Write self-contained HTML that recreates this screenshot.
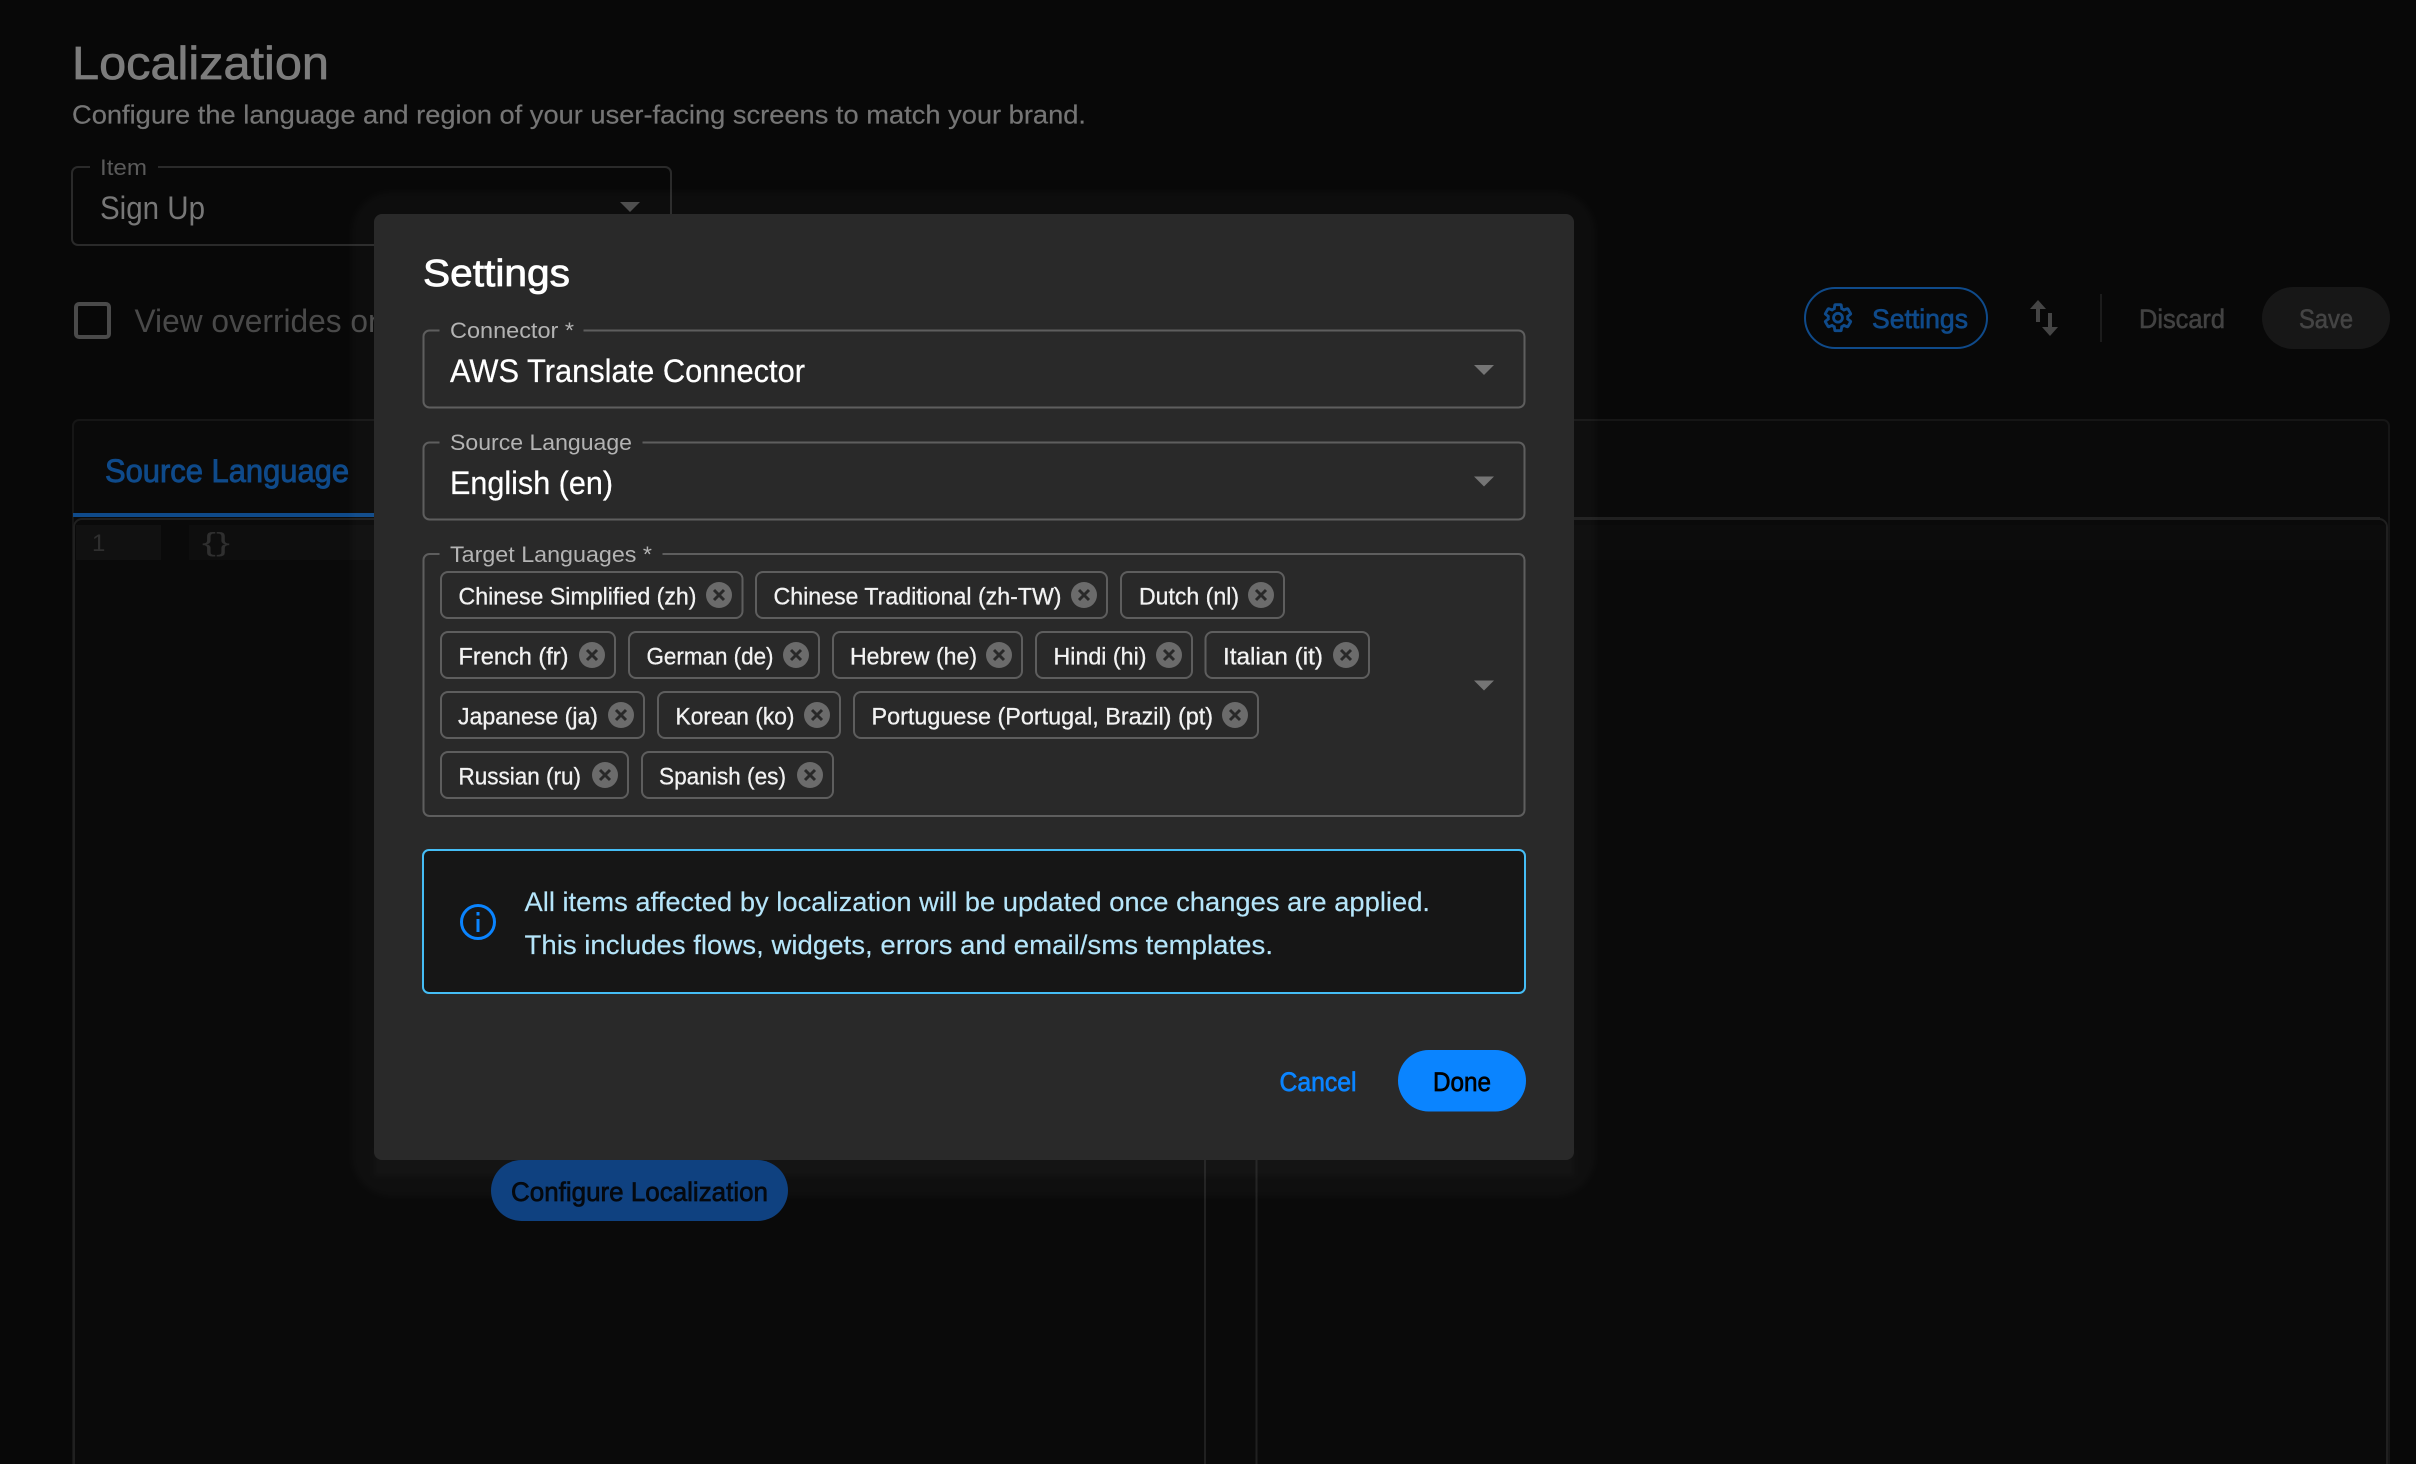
<!DOCTYPE html>
<html lang="en">
<head>
<meta charset="utf-8">
<title>Localization</title>
<style>
html,body{margin:0;padding:0;background:#080808;width:2416px;height:1464px;overflow:hidden}
svg{display:block;position:absolute;left:0;top:0}
text{font-family:"Liberation Sans",sans-serif;white-space:pre}
.chip text{font-size:24px;fill:#f2f2f2;stroke:#f2f2f2;stroke-width:.3px}
.chip rect{fill:none;stroke:#5e5e5e;stroke-width:2}
.chip circle{fill:#6b6b6b}
.chip path{stroke:#292929;stroke-width:3;fill:none}
.fld{fill:none;stroke:#5e5e5e;stroke-width:2}
.lab{font-size:22px;fill:#b3b3b3}
.val{font-size:32px;fill:#fff;stroke:#fff;stroke-width:.25px}
.arr{fill:#757575}
</style>
</head>
<body>
<svg width="2416" height="1464" viewBox="0 0 2416 1464" xmlns="http://www.w3.org/2000/svg">
  <defs>
    <filter id="halo" x="-10%" y="-10%" width="120%" height="120%"><feGaussianBlur stdDeviation="3"/></filter>
  </defs>
  <rect width="2416" height="1464" fill="#080808"/>

  <!-- background page -->
  <text x="72" y="79" font-size="46" fill="#7c7c7c" stroke="#7c7c7c" stroke-width=".7" textLength="257" lengthAdjust="spacingAndGlyphs">Localization</text>
  <text x="72" y="123.500" font-size="26" fill="#757575" stroke="#757575" stroke-width=".2" textLength="1014" lengthAdjust="spacingAndGlyphs">Configure the language and region of your user-facing screens to match your brand.</text>

  <path d="M90 167H78a6 6 0 0 0-6 6v66a6 6 0 0 0 6 6H665a6 6 0 0 0 6-6V173a6 6 0 0 0-6-6H158" fill="none" stroke="#2a2a2a" stroke-width="2"/>
  <text x="100" y="175" font-size="22" fill="#5a5a5a" textLength="47" lengthAdjust="spacingAndGlyphs">Item</text>
  <text x="100" y="219" font-size="32" fill="#777" textLength="105" lengthAdjust="spacingAndGlyphs">Sign Up</text>
  <path d="M620 202h20l-10 10z" fill="#4a4a4a"/>

  <rect x="76" y="304" width="33" height="33" rx="3" fill="none" stroke="#4a4a4a" stroke-width="4"/>
  <text x="134.500" y="332" font-size="32" fill="#494949" textLength="274" lengthAdjust="spacingAndGlyphs">View overrides only</text>

  <!-- toolbar -->
  <rect x="1805" y="288" width="182" height="60" rx="30" fill="none" stroke="#0f4a8a" stroke-width="2"/>
  <g transform="translate(1822.4 302.1) scale(1.3)" fill="none" stroke="#0f4a8a" stroke-width="2.200">
    <path d="M19.43 12.98c.04-.32.07-.64.07-.98 0-.34-.03-.66-.07-.98l2.11-1.65c.19-.15.24-.42.12-.64l-2-3.46c-.09-.16-.26-.25-.44-.25-.06 0-.12.01-.17.03l-2.49 1c-.52-.4-1.08-.73-1.69-.98l-.38-2.65C14.46 2.18 14.25 2 14 2h-4c-.25 0-.46.18-.49.42l-.38 2.65c-.61.25-1.17.59-1.69.98l-2.49-1c-.06-.02-.12-.03-.18-.03-.17 0-.34.09-.43.25l-2 3.46c-.13.22-.07.49.12.64l2.11 1.65c-.04.32-.07.65-.07.98 0 .33.03.66.07.98l-2.11 1.65c-.19.15-.24.42-.12.64l2 3.46c.09.16.26.25.44.25.06 0 .12-.01.17-.03l2.49-1c.52.4 1.08.73 1.69.98l.38 2.65c.03.24.24.42.49.42h4c.25 0 .46-.18.49-.42l.38-2.65c.61-.25 1.17-.59 1.69-.98l2.49 1c.06.02.12.03.18.03.17 0 .34-.09.43-.25l2-3.46c.12-.22.07-.49-.12-.64l-2.11-1.65z"/>
    <circle cx="12" cy="12" r="3.400"/>
  </g>
  <text x="1872" y="328" font-size="27" fill="#0f4a8a" stroke="#0f4a8a" stroke-width=".7" textLength="96" lengthAdjust="spacingAndGlyphs">Settings</text>
  <path d="M2038 300l8 9h-6v13h-4v-13h-6z" fill="#454545"/>
  <path d="M2050 336l-8-9h6v-14h4v14h6z" fill="#454545"/>
  <rect x="2100" y="294" width="2" height="48" fill="#1c1c1c"/>
  <text x="2139" y="328" font-size="27" fill="#424242" stroke="#424242" stroke-width=".6" textLength="86" lengthAdjust="spacingAndGlyphs">Discard</text>
  <rect x="2262" y="287" width="128" height="62" rx="31" fill="#171717"/>
  <text x="2299" y="328" font-size="27" fill="#444" stroke="#444" stroke-width=".6" textLength="54" lengthAdjust="spacingAndGlyphs">Save</text>

  <!-- tab panel -->
  <rect x="73" y="420" width="2316" height="1060" rx="6" fill="#0a0a0a" stroke="#161616" stroke-width="2"/>
  <text x="105" y="482" font-size="32" fill="#0f4a8a" stroke="#0f4a8a" stroke-width=".9" textLength="244" lengthAdjust="spacingAndGlyphs">Source Language</text>
  <rect x="73" y="513" width="360" height="4" fill="#0f4a8a"/>
  <path d="M74 1470V527a8 8 0 0 1 8-8H1205V1470" fill="none" stroke="#202020" stroke-width="2"/>
  <path d="M1256.500 1470V519H2379a8 8 0 0 1 8 8V1470" fill="none" stroke="#202020" stroke-width="2"/>
  <path d="M433 518H2380" stroke="#202020" stroke-width="2"/>
  <rect x="76" y="525" width="85" height="35" fill="#111"/>
  <rect x="189" y="525" width="1015" height="35" fill="#0e0e0e"/>
  <rect x="1258" y="525" width="1128" height="35" fill="#0c0c0c"/>
  <text x="92" y="551" font-size="24" fill="#2f2f2f" font-family="Liberation Mono">1</text>
  <text x="202" y="551" font-size="26" fill="#2f2f2f" textLength="28" lengthAdjust="spacingAndGlyphs">{}</text>

  <!-- modal halo -->
  <rect x="352" y="192" width="1243" height="1004" rx="40" fill="#fff" fill-opacity=".018" filter="url(#halo)"/>
  <rect x="374" y="1150" width="1200" height="26" fill="#fff" fill-opacity=".018" filter="url(#halo)"/>

  <rect x="491" y="1160" width="297" height="61" rx="30.500" fill="#0f4180"/>
  <text x="511" y="1201" font-size="27" fill="#05090f" stroke="#05090f" stroke-width=".7" textLength="257" lengthAdjust="spacingAndGlyphs">Configure Localization</text>

  <!-- modal -->
  <rect x="374" y="214" width="1200" height="946" rx="8" fill="#292929"/>
  <text x="423" y="286" font-size="38" fill="#fff" stroke="#fff" stroke-width=".8" textLength="147" lengthAdjust="spacingAndGlyphs">Settings</text>

  <path d="M440 330H430a6 6 0 0 0-6 6v65a6 6 0 0 0 6 6H1519a6 6 0 0 0 6-6V336a6 6 0 0 0-6-6H584" class="fld" transform="translate(-.5 .500)"/>
  <text x="450" y="338" class="lab" textLength="124" lengthAdjust="spacingAndGlyphs">Connector *</text>
  <text x="450" y="382" class="val" textLength="355" lengthAdjust="spacingAndGlyphs">AWS Translate Connector</text>
  <path d="M1474 365h20l-10 10z" class="arr"/>

  <path d="M440 442H430a6 6 0 0 0-6 6v65a6 6 0 0 0 6 6H1519a6 6 0 0 0 6-6V448a6 6 0 0 0-6-6H643" class="fld" transform="translate(-.5 .500)"/>
  <text x="450" y="450" class="lab" textLength="182" lengthAdjust="spacingAndGlyphs">Source Language</text>
  <text x="450" y="494" class="val" textLength="163" lengthAdjust="spacingAndGlyphs">English (en)</text>
  <path d="M1474 476.500h20l-10 10z" class="arr"/>

  <path d="M440 554H430a6 6 0 0 0-6 6v250a6 6 0 0 0 6 6H1519a6 6 0 0 0 6-6V560a6 6 0 0 0-6-6H663" class="fld" transform="translate(-.5 0)"/>
  <text x="450" y="562" class="lab" textLength="202" lengthAdjust="spacingAndGlyphs">Target Languages *</text>
  <path d="M1474 680.500h20l-10 10z" class="arr"/>

  <!-- chips row 1 -->
  <g class="chip">
    <rect x="441" y="572" width="301.500" height="46" rx="7"/>
    <text x="458.500" y="604.500" textLength="238" lengthAdjust="spacingAndGlyphs">Chinese Simplified (zh)</text>
    <circle cx="719" cy="595" r="13"/><path d="M714 590l10 10m0-10l-10 10"/>
  </g>
  <g class="chip">
    <rect x="756" y="572" width="351" height="46" rx="7"/>
    <text x="773.500" y="604.500" textLength="288" lengthAdjust="spacingAndGlyphs">Chinese Traditional (zh-TW)</text>
    <circle cx="1084" cy="595" r="13"/><path d="M1079 590l10 10m0-10l-10 10"/>
  </g>
  <g class="chip">
    <rect x="1121" y="572" width="163" height="46" rx="7"/>
    <text x="1139" y="604.500" textLength="100" lengthAdjust="spacingAndGlyphs">Dutch (nl)</text>
    <circle cx="1261" cy="595" r="13"/><path d="M1256 590l10 10m0-10l-10 10"/>
  </g>

  <!-- chips row 2 -->
  <g class="chip">
    <rect x="441" y="632" width="174" height="46" rx="7"/>
    <text x="458.500" y="664.700" textLength="110" lengthAdjust="spacingAndGlyphs">French (fr)</text>
    <circle cx="592" cy="655" r="13"/><path d="M587 650l10 10m0-10l-10 10"/>
  </g>
  <g class="chip">
    <rect x="629" y="632" width="190" height="46" rx="7"/>
    <text x="646.500" y="664.700" textLength="127" lengthAdjust="spacingAndGlyphs">German (de)</text>
    <circle cx="796" cy="655" r="13"/><path d="M791 650l10 10m0-10l-10 10"/>
  </g>
  <g class="chip">
    <rect x="833" y="632" width="189" height="46" rx="7"/>
    <text x="850" y="664.700" textLength="127" lengthAdjust="spacingAndGlyphs">Hebrew (he)</text>
    <circle cx="999" cy="655" r="13"/><path d="M994 650l10 10m0-10l-10 10"/>
  </g>
  <g class="chip">
    <rect x="1036" y="632" width="156" height="46" rx="7"/>
    <text x="1053.500" y="664.700" textLength="93" lengthAdjust="spacingAndGlyphs">Hindi (hi)</text>
    <circle cx="1169" cy="655" r="13"/><path d="M1164 650l10 10m0-10l-10 10"/>
  </g>
  <g class="chip">
    <rect x="1205.500" y="632" width="163.500" height="46" rx="7"/>
    <text x="1223" y="664.700" textLength="100" lengthAdjust="spacingAndGlyphs">Italian (it)</text>
    <circle cx="1346" cy="655" r="13"/><path d="M1341 650l10 10m0-10l-10 10"/>
  </g>

  <!-- chips row 3 -->
  <g class="chip">
    <rect x="441" y="692" width="203" height="46" rx="7"/>
    <text x="458" y="724.700" textLength="140" lengthAdjust="spacingAndGlyphs">Japanese (ja)</text>
    <circle cx="621" cy="715" r="13"/><path d="M616 710l10 10m0-10l-10 10"/>
  </g>
  <g class="chip">
    <rect x="658" y="692" width="182" height="46" rx="7"/>
    <text x="675.500" y="724.700" textLength="119" lengthAdjust="spacingAndGlyphs">Korean (ko)</text>
    <circle cx="817" cy="715" r="13"/><path d="M812 710l10 10m0-10l-10 10"/>
  </g>
  <g class="chip">
    <rect x="854" y="692" width="404" height="46" rx="7"/>
    <text x="871.500" y="724.700" textLength="341.500" lengthAdjust="spacingAndGlyphs">Portuguese (Portugal, Brazil) (pt)</text>
    <circle cx="1235" cy="715" r="13"/><path d="M1230 710l10 10m0-10l-10 10"/>
  </g>

  <!-- chips row 4 -->
  <g class="chip">
    <rect x="441" y="752" width="187" height="46" rx="7"/>
    <text x="458.500" y="784.700" textLength="122.500" lengthAdjust="spacingAndGlyphs">Russian (ru)</text>
    <circle cx="605" cy="775" r="13"/><path d="M600 770l10 10m0-10l-10 10"/>
  </g>
  <g class="chip">
    <rect x="642" y="752" width="191" height="46" rx="7"/>
    <text x="659" y="784.700" textLength="127" lengthAdjust="spacingAndGlyphs">Spanish (es)</text>
    <circle cx="810" cy="775" r="13"/><path d="M805 770l10 10m0-10l-10 10"/>
  </g>

  <!-- info box -->
  <rect x="423" y="850" width="1102" height="143" rx="6" fill="#161616" stroke="#45bdf5" stroke-width="2"/>
  <circle cx="478" cy="922" r="16.500" fill="none" stroke="#0a84ff" stroke-width="3"/>
  <rect x="476.500" y="912" width="3" height="3.500" fill="#0a84ff"/>
  <rect x="476.500" y="919" width="3" height="13" fill="#0a84ff"/>
  <text x="524.500" y="911" font-size="27" fill="#b5e5fa" stroke="#b5e5fa" stroke-width=".15" textLength="905.500" lengthAdjust="spacingAndGlyphs">All items affected by localization will be updated once changes are applied.</text>
  <text x="524.500" y="954" font-size="27" fill="#b5e5fa" stroke="#b5e5fa" stroke-width=".15" textLength="748.500" lengthAdjust="spacingAndGlyphs">This includes flows, widgets, errors and email/sms templates.</text>

  <!-- actions -->
  <text x="1279.500" y="1091" font-size="27" fill="#0a84ff" stroke="#0a84ff" stroke-width=".7" textLength="77" lengthAdjust="spacingAndGlyphs">Cancel</text>
  <rect x="1398" y="1050" width="128" height="61.500" rx="30.700" fill="#0a84ff"/>
  <text x="1433" y="1091" font-size="27" fill="#000" stroke="#000" stroke-width=".7" textLength="58" lengthAdjust="spacingAndGlyphs">Done</text>
</svg>
</body>
</html>
